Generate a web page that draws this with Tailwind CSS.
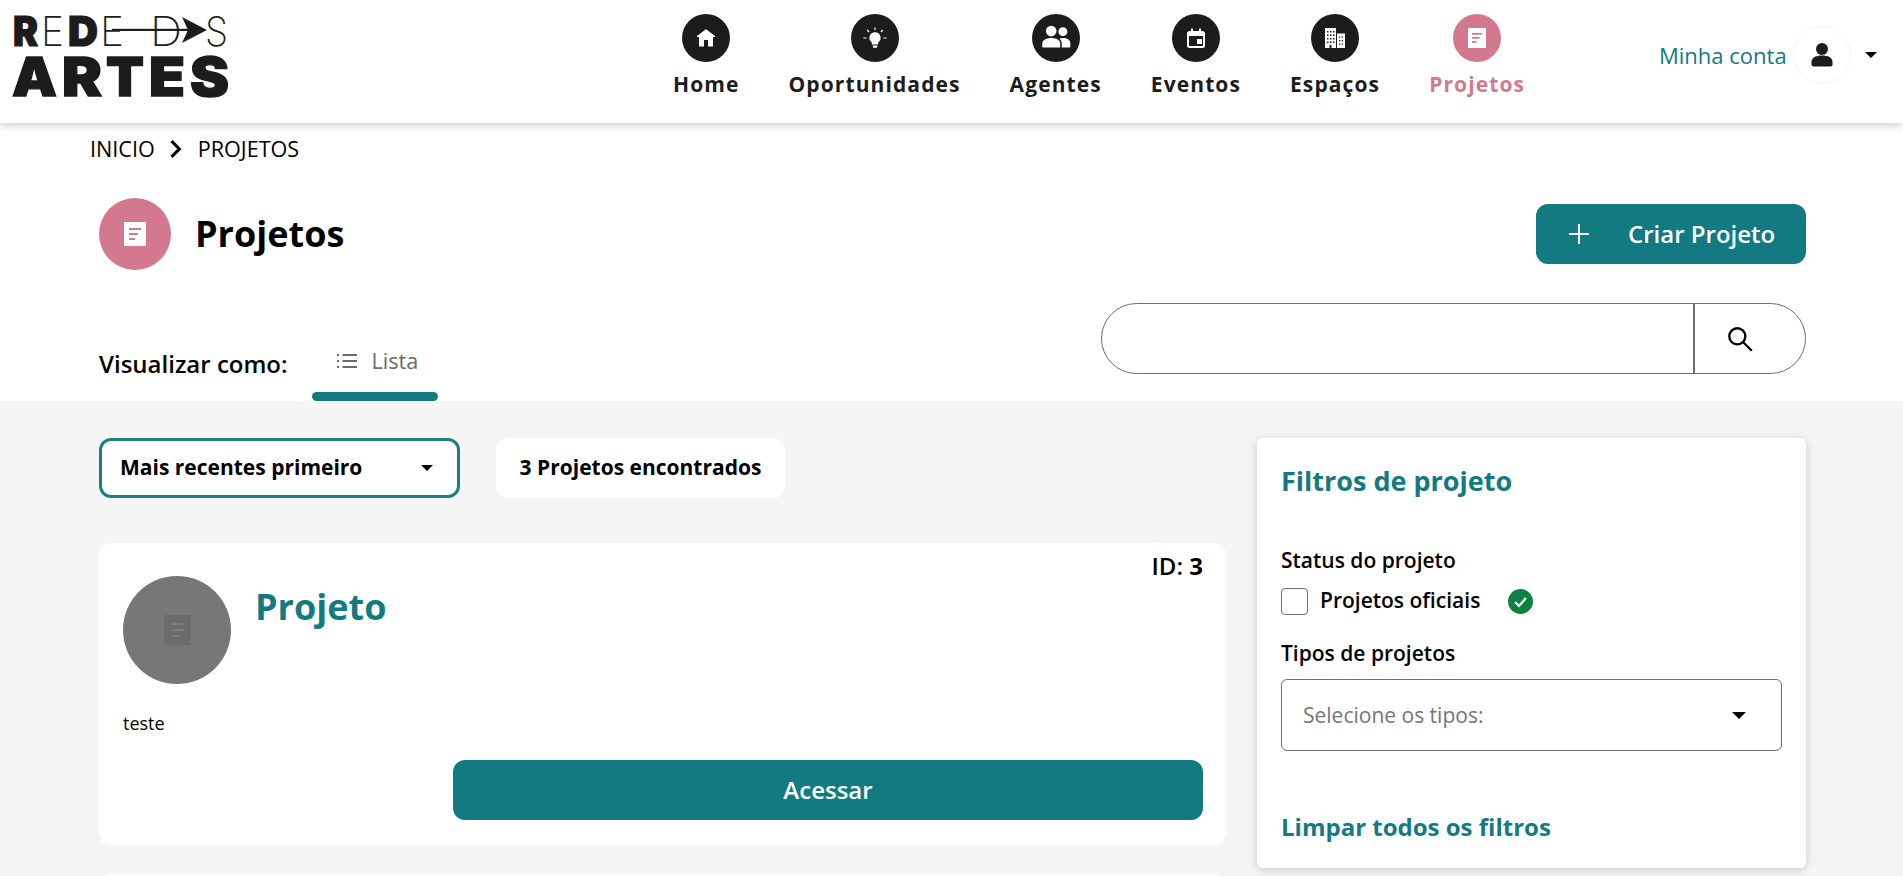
<!DOCTYPE html>
<html lang="pt-BR">
<head>
<meta charset="utf-8">
<title>Projetos</title>
<script src="https://cdn.jsdelivr.net/npm/@tailwindcss/browser@4"></script>
</head>
<body class="w-[1903px] h-[876px] overflow-hidden bg-[#f5f5f5] font-['Open_Sans',sans-serif] text-black">
<header class="relative z-10 h-[123px] bg-white shadow-[0_2px_8px_rgba(0,0,0,0.2)] flex items-start">
  <svg class="ml-[10px] mt-[12px] shrink-0 overflow-visible" width="225" height="88" viewBox="10 12 225 88" fill="#1c1c1c" font-family="Inter, sans-serif">
    <g font-size="41">
      <text x="13" y="46" font-weight="900" textLength="25" lengthAdjust="spacingAndGlyphs" stroke="#1c1c1c" stroke-width="1.2">R</text>
      <text x="41" y="46" font-weight="200" textLength="23" lengthAdjust="spacingAndGlyphs">E</text>
      <text x="68" y="46" font-weight="900" textLength="30" lengthAdjust="spacingAndGlyphs" stroke="#1c1c1c" stroke-width="1.2">D</text>
      <text x="100" y="46" font-weight="200" textLength="24" lengthAdjust="spacingAndGlyphs">E</text>
      <text x="150" y="46" font-weight="200" textLength="32" lengthAdjust="spacingAndGlyphs">D</text>
      <text x="205" y="46" font-weight="200" textLength="23" lengthAdjust="spacingAndGlyphs">S</text>
    </g>
    <rect x="112" y="28.8" width="80" height="2.2"/>
    <path d="M182 17l25 13-25 13 6-13z" fill="#1c1c1c"/>
    <g font-size="53" font-weight="900" stroke="#1c1c1c" stroke-width="1.4">
      <text x="12" y="95.500" textLength="45" lengthAdjust="spacingAndGlyphs">A</text>
      <text x="62" y="95.500" textLength="40" lengthAdjust="spacingAndGlyphs">R</text>
      <text x="106" y="95.500" textLength="38" lengthAdjust="spacingAndGlyphs">T</text>
      <text x="149" y="95.500" textLength="36" lengthAdjust="spacingAndGlyphs">E</text>
      <text x="190" y="95.500" textLength="39" lengthAdjust="spacingAndGlyphs">S</text>
    </g>
  </svg>
  <nav class="ml-[438px] mt-[14px] flex gap-[49px] text-[21px] leading-[28px] font-bold tracking-[1.1px] text-[#1c1c1c]">
    <a class="flex flex-col items-center gap-[8px]">
      <span class="w-[48px] h-[48px] rounded-full bg-[#1c1c1c] flex items-center justify-center">
        <svg width="24" height="24" viewBox="0 0 24 24" fill="#fff"><path d="M5 20.5V11H3.4a.5.5 0 0 1-.3-.9l8.4-6.7a.8.8 0 0 1 1 0l8.4 6.7a.5.5 0 0 1-.3.9H19v9.5h-5V14h-4v6.5z"/></svg>
      </span>
      <span>Home</span>
    </a>
    <a class="flex flex-col items-center gap-[8px]">
      <span class="w-[48px] h-[48px] rounded-full bg-[#1c1c1c] flex items-center justify-center">
        <svg width="26" height="26" viewBox="0 0 26 26" fill="#fff"><path d="M13 7.2a5.6 5.6 0 0 0-3.2 10.2V19.5h6.4v-2.1A5.6 5.6 0 0 0 13 7.2zM10.6 20.6h4.8l-.5 2.2h-3.8z"/><path d="M12.4 2.4h1.2v2.6h-1.2zM1.5 12.4h3v1.2h-3zM21.5 12.4h3v1.2h-3zM4.7 5.5l.9-.9 1.9 1.9-.9.9zM18.5 6.5l1.9-1.9.9.9-1.9 1.9z"/></svg>
      </span>
      <span>Oportunidades</span>
    </a>
    <a class="flex flex-col items-center gap-[8px]">
      <span class="w-[48px] h-[48px] rounded-full bg-[#1c1c1c] flex items-center justify-center">
        <svg width="34" height="34" viewBox="0 0 32 32" fill="#fff"><circle cx="11.5" cy="9.5" r="5"/><circle cx="22.5" cy="10" r="4.2"/><path d="M3 24v-2.5C3 18 7 16 11.5 16S20 18 20 21.5V25H4a1 1 0 0 1-1-1z"/><path d="M21.5 25v-3.5c0-2-.9-3.600-2.300-4.800 1-.4 2.100-.6 3.300-.6 3.800 0 7 1.700 7 4.800V24a1 1 0 0 1-1 1z"/></svg>
      </span>
      <span>Agentes</span>
    </a>
    <a class="flex flex-col items-center gap-[8px]">
      <span class="w-[48px] h-[48px] rounded-full bg-[#1c1c1c] flex items-center justify-center">
        <svg width="24" height="24" viewBox="0 0 24 24" fill="#fff"><path d="M7 2.500h2V5h6V2.500h2V5h1.500A2.500 2.500 0 0 1 21 7.500v12a2.500 2.500 0 0 1-2.500 2.500h-13A2.500 2.500 0 0 1 3 19.500v-12A2.500 2.500 0 0 1 5.500 5H7zM5 10v9.500c0 .3.200.5.5.5h13c.3 0 .5-.2.5-.5V10zM13 13h5v5h-5z" fill-rule="evenodd"/></svg>
      </span>
      <span>Eventos</span>
    </a>
    <a class="flex flex-col items-center gap-[8px]">
      <span class="w-[48px] h-[48px] rounded-full bg-[#1c1c1c] flex items-center justify-center">
        <svg width="24" height="24" viewBox="0 0 24 24"><path fill="#fff" d="M2 2h11v20H8.500v-3h-2v3H2z"/><path fill="#fff" d="M14 7.500h8V22h-8z"/><g fill="#1c1c1c"><path d="M4 5h1.500v1.500H4zM7 5h1.500v1.500H7zM10 5h1.500v1.500H10zM4 8.500h1.500V10H4zM7 8.500h1.500V10H7zM10 8.500h1.500V10H10zM4 12h1.500v1.500H4zM7 12h1.500v1.500H7zM10 12h1.500v1.500H10zM4 15.500h1.500V17H4zM7 15.500h1.500V17H7zM10 15.500h1.500V17H10zM16 10.500h1.300v1.300H16zM18.700 10.500H20v1.300h-1.300zM16 14h1.300v1.300H16zM18.700 14H20v1.300h-1.300zM16 17.500h1.300v1.300H16zM18.700 17.500H20v1.300h-1.300z"/></g></svg>
      </span>
      <span>Espaços</span>
    </a>
    <a class="flex flex-col items-center gap-[8px] text-[#d3788f]">
      <span class="w-[48px] h-[48px] rounded-full bg-[#d3788f] flex items-center justify-center">
        <svg width="24" height="24" viewBox="0 0 24 24"><path fill="#fff" d="M3 2h18v20H3z"/><path fill="#d3788f" d="M7 7h10v1.800H7zM7 11h7.500v1.800H7zM7 15h4.500v1.800H7z"/></svg>
      </span>
      <span>Projetos</span>
    </a>
  </nav>
  <div class="ml-[134px] mt-[26px] flex items-center">
    <span class="text-[22px] leading-[58px] font-medium text-[#137a82]">Minha conta</span>
    <span class="ml-[6px] w-[58px] h-[58px] rounded-full border border-[#f4f4f4] flex items-center justify-center">
      <svg width="28" height="28" viewBox="0 0 28 28" fill="#1c1c1c"><circle cx="14" cy="8" r="6"/><path d="M3.500 21c0-4.500 4.500-6.500 10.500-6.500S24.500 16.500 24.500 21v2.500a2 2 0 0 1-2 2h-17a2 2 0 0 1-2-2z"/></svg>
    </span>
    <span class="ml-[14px] w-0 h-0 border-x-[6px] border-x-transparent border-t-[6px] border-t-black"></span>
  </div>
</header>

<section class="relative h-[278px] bg-white">
  <div class="pl-[90px] pt-[12px] flex items-center text-[21.6px] leading-[27px] font-semibold">
    <span class="font-medium">INICIO</span>
    <svg class="ml-[13px] mr-[14px]" width="16" height="20" viewBox="0 0 14 18" fill="none" stroke="#000" stroke-width="2.800"><path d="M3 2l7 7-7 7"/></svg>
    <span class="font-medium">PROJETOS</span>
  </div>
  <div class="pl-[99px] pr-[97px] mt-[36px] flex items-start justify-between">
    <div class="flex items-center gap-[24px]">
      <span class="w-[72px] h-[72px] rounded-full bg-[#d3788f] flex items-center justify-center">
        <svg width="24" height="24" viewBox="0 0 24 24"><path fill="#fff" d="M1 0h22v24H1z"/><path fill="#d3788f" d="M6 6h12v2H6zM6 11h9v2H6zM6 16h6v2H6z"/></svg>
      </span>
      <h1 class="text-[36px] leading-[44px] font-bold">Projetos</h1>
    </div>
    <button class="mt-[6px] w-[270px] h-[60px] rounded-[12px] bg-[#137a82] text-white flex items-center pl-[32px] text-[24px] leading-[32px] font-semibold">
      <svg class="mr-[38px]" width="22" height="22" viewBox="0 0 22 22" stroke="#fff" stroke-width="2" fill="none"><path d="M11 1v20M1 11h20"/></svg>
      Criar Projeto
    </button>
  </div>
  <div class="pl-[99px] pr-[97px] mt-[33px] flex items-start justify-between">
    <div class="flex items-start">
      <span class="mt-[44px] text-[24px] leading-[33px] font-semibold">Visualizar como:</span>
      <span class="ml-[24px] w-[126px] flex flex-col">
        <span class="flex items-center pt-[44px] pl-[24px] gap-[14px] text-[21.6px] leading-[27px] text-[#6a6a6a]">
          <svg width="22" height="22" viewBox="0 0 22 22" fill="none" stroke="#6a6a6a" stroke-width="2"><path d="M6.500 5H21M6.500 11H21M6.500 17H21M1 5h2M1 11h2M1 17h2"/></svg>
          Lista
        </span>
        <span class="mt-[18px] h-[9px] rounded-full bg-[#137a82]"></span>
      </span>
    </div>
    <div class="w-[705px] h-[71px] border border-[#6e6e6e] rounded-full flex justify-end">
      <span class="w-[112px] border-l-2 border-[#6e6e6e] flex items-center justify-center pr-[20px]">
        <svg width="30" height="30" viewBox="0 0 28 28" fill="none" stroke="#000" stroke-width="2.200"><circle cx="11.500" cy="11.500" r="7.500"/><path d="M17 17l8 8"/></svg>
      </span>
    </div>
  </div>
</section>

<main class="pl-[99px] pr-[97px] pt-[37px] flex justify-between items-start">
  <div class="w-[1127px]">
    <div class="flex gap-[36px]">
      <div class="w-[361px] h-[60px] rounded-[12px] bg-white border-[3px] border-[#1c7d85] flex items-center pl-[18px] pr-[24px] justify-between text-[21px] font-bold">
        <span>Mais recentes primeiro</span>
        <span class="w-0 h-0 border-x-[6.500px] border-x-transparent border-t-[6.500px] border-t-black"></span>
      </div>
      <div class="w-[289px] h-[60px] rounded-[12px] bg-white flex items-center justify-center text-[21px] font-bold">3 Projetos encontrados</div>
    </div>
    <article class="mt-[45px] h-[302px] rounded-[12px] bg-white relative pt-[33px] px-[24px]">
      <div class="absolute right-[23px] top-[8px] text-[24px] leading-[30px] font-semibold">ID: <b class="font-bold">3</b></div>
      <div class="flex gap-[24px]">
        <span class="w-[108px] h-[108px] rounded-full bg-[#777777] flex items-center justify-center">
          <svg width="27" height="30" viewBox="0 0 27 30"><path fill="#6c6c6c" d="M0 0h27v30H0z"/><path fill="#7c7c7c" d="M8 8h12v2H8zM8 14h12v2H8zM8 20h7v2H8z"/></svg>
        </span>
        <h2 class="mt-[6px] text-[36px] leading-[49px] font-bold text-[#137a82]">Projeto</h2>
      </div>
      <p class="mt-[28px] text-[18px] leading-[22px]">teste</p>
      <button class="absolute left-[354px] bottom-[25px] w-[750px] h-[60px] rounded-[12px] bg-[#137a82] text-white text-[24px] font-semibold">Acessar</button>
    </article>
    <div class="mt-[29px] h-[40px] rounded-[12px] bg-white"></div>
  </div>
  <aside class="mt-0 w-[549px] h-[430px] rounded-[6px] bg-white shadow-[0_2px_10px_rgba(0,0,0,0.18)] pl-[24px] pr-[24px]">
    <h3 class="pt-[25px] text-[27px] leading-[36px] font-bold text-[#137a82]">Filtros de projeto</h3>
    <p class="mt-[48px] text-[21px] leading-[27px] font-semibold">Status do projeto</p>
    <label class="mt-[13px] flex items-center h-[28px] text-[21px] font-semibold">
      <span class="w-[27px] h-[27px] rounded-[4px] border border-[#6e6e6e] bg-white"></span>
      <span class="ml-[12px]">Projetos oficiais</span>
      <svg class="ml-[28px]" width="25" height="25" viewBox="0 0 25 25"><circle cx="12.500" cy="12.500" r="12.500" fill="#0e8142"/><path d="M7 13l4 4 7-8" fill="none" stroke="#fff" stroke-width="2.200"/></svg>
    </label>
    <p class="mt-[25px] text-[21px] leading-[27px] font-semibold">Tipos de projetos</p>
    <div class="mt-[12px] h-[72px] rounded-[6px] border border-[#6e6e6e] flex items-center justify-between pl-[21px] pr-[35px] pt-[1px] text-[21px] text-[#757575]">
      <span>Selecione os tipos:</span>
      <span class="w-0 h-0 border-x-[7px] border-x-transparent border-t-[7px] border-t-black"></span>
    </div>
    <p class="mt-[59px] text-[24px] leading-[33px] font-bold text-[#137a82]">Limpar todos os filtros</p>
  </aside>
</main>
</body>
</html>
